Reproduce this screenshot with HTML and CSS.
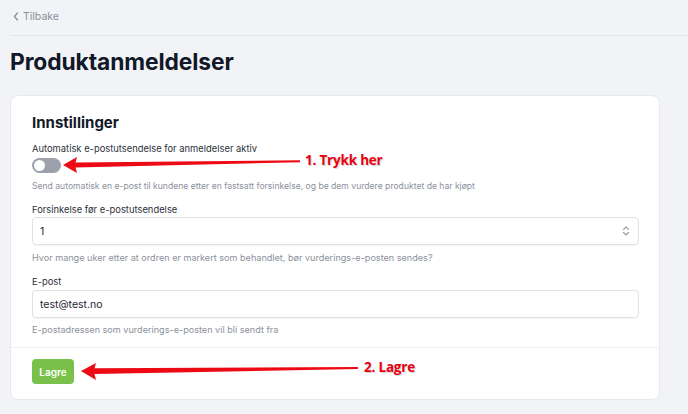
FILE: index.html
```html
<!DOCTYPE html>
<html lang="no">
<head>
<meta charset="utf-8">
<title>Produktanmeldelser</title>
<link rel="stylesheet" href="styles.css">
</head>
<body>
<div class="page">
  <div class="topbar">
    <a class="back" href="#"><svg class="back-icon" width="6" height="9" viewBox="0 0 6 9"><path d="M4.5 1 L1.5 4.5 L4.5 8" fill="none" stroke="#8a8f99" stroke-width="1.3" stroke-linecap="round" stroke-linejoin="round"/></svg>Tilbake</a>
  </div>
  <h1 class="title">Produktanmeldelser</h1>
  <div class="card">
    <div class="card-body">
      <h2 class="card-title">Innstillinger</h2>
      <div class="field field-toggle">
        <div class="label">Automatisk e-postutsendelse for anmeldelser aktiv</div>
        <div class="toggle"><span class="knob"></span></div>
        <div class="help help-toggle">Send automatisk en e-post til kundene etter en fastsatt forsinkelse, og be dem vurdere produktet de har kjøpt</div>
      </div>
      <div class="field">
        <div class="label">Forsinkelse før e-postutsendelse</div>
        <div class="control select">
          <span>1</span>
          <svg class="select-icon" width="8" height="12" viewBox="0 0 8 12"><path d="M1.5 4.5 L4 2 L6.5 4.5 M1.5 7.5 L4 10 L6.5 7.5" fill="none" stroke="#9aa0aa" stroke-width="1.1" stroke-linecap="round" stroke-linejoin="round"/></svg>
        </div>
        <div class="help help-select">Hvor mange uker etter at ordren er markert som behandlet, bør vurderings-e-posten sendes?</div>
      </div>
      <div class="field">
        <div class="label label-email">E-post</div>
        <div class="control"><span>test@test.no</span></div>
        <div class="help">E-postadressen som vurderings-e-posten vil bli sendt fra</div>
      </div>
    </div>
    <div class="card-footer">
      <button class="btn-save">Lagre</button>
    </div>
  </div>
</div>
<svg class="annotations" width="688" height="414" viewBox="0 0 688 414">
  <polygon fill="#ec0a14" points="63,165 77,157 75.5,162.4 300,160.2 300,162.2 75.5,167.6 77,173"/>
  <polygon fill="#ec0a14" points="81,371 96,363 94.5,368.2 358,367 358,369 94.5,374 96,380"/>
</svg>
<span class="note note-1">1. Trykk her</span>
<span class="note note-2">2. Lagre</span>
</body>
</html>
```
FILE: styles.css
```css
* { box-sizing: border-box; }
html, body { margin: 0; padding: 0; }
body {
  width: 688px;
  height: 414px;
  overflow: hidden;
  background: #f2f3f7;
  font-family: Inter, "Noto Sans", sans-serif;
  color: #1f2430;
  position: relative;
}
.page { padding-left: 10px; }
.topbar {
  height: 36px;
  border-bottom: 1px solid #e4e6ec;
  padding: 5px 0 0 3px;
}
.back {
  display: inline-flex;
  align-items: center;
  gap: 4px;
  font-size: 10.5px;
  line-height: 14px;
  color: #8a8f99;
  text-decoration: none;
}
.back-icon { display: block; }
.title {
  margin: 11px 0 0 0;
  font-size: 22.8px;
  line-height: 30px;
  font-weight: 700;
  color: #111827;
  letter-spacing: -0.1px;
}
.card {
  margin-top: 18px;
  width: 650px;
  background: #fff;
  border: 1px solid #e6e8ee;
  border-radius: 8px;
}
.card-body { padding: 17px 20px 11px 21px; }
.card-title {
  margin: 0 0 9px 0;
  font-size: 15px;
  line-height: 20px;
  font-weight: 700;
  color: #111827;
}
.field { margin-bottom: 11px; }
.field-toggle { margin-bottom: 10px; }
.field:last-child { margin-bottom: 0; }
.label {
  font-size: 9.4px;
  line-height: 13px;
  color: #2b303a;
  margin-bottom: 1px;
}
.label-email { margin-bottom: 2px; }
.toggle {
  margin-top: 3px;
  width: 29px;
  height: 15px;
  border-radius: 8px;
  background: #9ca1ab;
  padding: 2px;
}
.knob {
  display: block;
  width: 11px;
  height: 11px;
  border-radius: 50%;
  background: #fff;
}
.help {
  margin-top: 5px;
  font-size: 9.1px;
  line-height: 13px;
  color: #8c919b;
}
.help-toggle { margin-top: 7px; font-size: 8.6px; }
.help-select { margin-top: 6px; }
.control {
  height: 28px;
  width: 607px;
  border: 1px solid #dfe1e7;
  border-radius: 4px;
  box-shadow: 0 1px 1px rgba(0,0,0,0.04);
  display: flex;
  align-items: center;
  justify-content: space-between;
  padding: 0 8px 0 7px;
  font-size: 10.5px;
  color: #1f2430;
}
.select-icon { display: block; }
.card-footer {
  border-top: 1px solid #eceef2;
  padding: 11px 21px 15px 21px;
}
.btn-save {
  display: block;
  width: 42px;
  height: 25px;
  border: 0;
  border-radius: 4px;
  background: #79c14a;
  color: #fff;
  font-family: Inter, "Noto Sans", sans-serif;
  font-weight: 600;
  font-size: 10px;
  padding: 0;
}
.annotations {
  position: absolute;
  left: 0;
  top: 0;
  pointer-events: none;
}
.note {
  position: absolute;
  font-family: "Open Sans", "Noto Sans", sans-serif;
  font-weight: 700;
  font-size: 13.5px;
  line-height: 18px;
  color: #e8000f;
  text-shadow: 1px 1px 0 #d7d7da, -0.5px -0.5px 0 #fff;
  white-space: nowrap;
  letter-spacing: -0.2px;
}
.note-1 { left: 305px; top: 151px; }
.note-2 { left: 364px; top: 358px; }
```
